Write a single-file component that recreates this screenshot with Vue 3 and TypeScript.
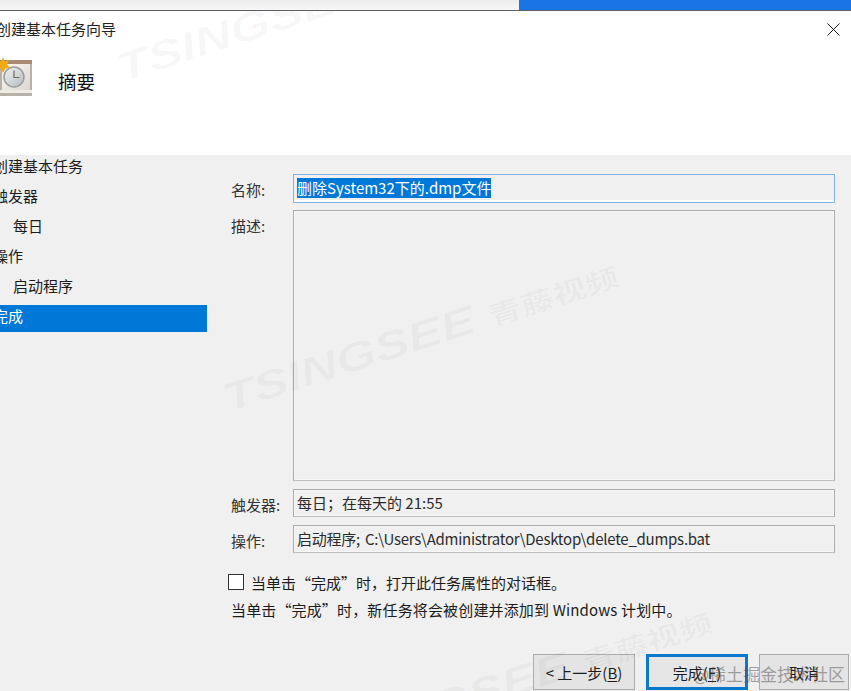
<script setup lang="ts">
const steps = [
  { label: '创建基本任务', sub: false, active: false },
  { label: '触发器', sub: false, active: false },
  { label: '每日', sub: true, active: false },
  { label: '操作', sub: false, active: false },
  { label: '启动程序', sub: true, active: false },
  { label: '完成', sub: false, active: true },
]
</script>

<template>
  <div class="page">
    <div class="topbar">
      <div class="topbar-left"></div>
      <div class="topbar-right"></div>
    </div>

    <div class="content">
      <header class="head">
        <div class="title-row">
          <span class="title">创建基本任务向导</span>
          <svg class="close" width="13" height="13" viewBox="0 0 13 13">
            <path d="M.5.5l12 12M12.5.5l-12 12" stroke="#111" stroke-width="1" fill="none" />
          </svg>
        </div>
        <div class="step-row">
          <svg class="wizard-icon" width="33" height="40" viewBox="0 0 33 40">
            <defs>
              <linearGradient id="page" x1="0" y1="0" x2="1" y2="1">
                <stop offset="0" stop-color="#fbf9f5" />
                <stop offset="1" stop-color="#dcd7ce" />
              </linearGradient>
              <linearGradient id="dial" x1="0" y1="0" x2="1" y2="1">
                <stop offset="0" stop-color="#f4f4f4" />
                <stop offset="1" stop-color="#b4bac1" />
              </linearGradient>
            </defs>
            <rect x="0" y="3" width="32" height="36" fill="#b7b1a7" />
            <rect x="0" y="3" width="32" height="4" fill="#a98a74" />
            <rect x="2" y="7" width="28" height="26" fill="url(#page)" />
            <rect x="0" y="33" width="32" height="3" fill="#efece6" />
            <circle cx="14" cy="20" r="10" fill="url(#dial)" stroke="#9a9c9e" stroke-width="1.5" />
            <path d="M14 13.500V20.500h5.500" stroke="#6d6a62" stroke-width="1.200" fill="none" />
            <path
              d="M3 0l1.600 4.400L9 3 7 7.500l3 3.500-4.600.2L3 16 .6 11.200-4 11l3-3.500L-3 3l4.400 1.400z"
              fill="#f5a913"
            />
          </svg>
          <span class="step-name">摘要</span>
        </div>
      </header>

      <main class="body">
        <nav class="steps">
          <div
            v-for="s in steps"
            :key="s.label"
            class="step"
            :class="{ sub: s.sub, active: s.active }"
          >
            <span>{{ s.label }}</span>
          </div>
        </nav>

        <section class="form">
          <div class="fields">
            <label class="lbl">名称:</label>
            <div class="box name"><span class="selected">删除System32下的.dmp文件</span></div>
            <label class="lbl">描述:</label>
            <div class="box"></div>
            <label class="lbl low">触发器:</label>
            <div class="box">每日；在每天的 21:55</div>
            <label class="lbl low">操作:</label>
            <div class="box path">启动程序; C:\Users\Administrator\Desktop\delete_dumps.bat</div>
          </div>

          <div class="check-row">
            <span class="checkbox"></span>
            <span>当单击“完成”时，打开此任务属性的对话框。</span>
          </div>
          <p class="note">当单击“完成”时，新任务将会被创建并添加到 Windows 计划中。</p>

          <div class="buttons">
            <button class="btn">&lt; 上一步(<u>B</u>)</button>
            <button class="btn primary">完成(<u>F</u>)</button>
            <button class="btn cancel">取消</button>
          </div>
        </section>
      </main>

      <div class="marks" aria-hidden="true">
        <span class="mark m1">TSINGSEE</span>
        <span class="mark m2">TSINGSEE <small>青藤视频</small></span>
        <span class="mark m3">TSINGSEE <small>青藤视频</small></span>
      </div>
    </div>

    <span class="credit">@稀土掘金技术社区</span>
  </div>
</template>

<style scoped>
.page {
  position: relative;
  width: 851px;
  height: 691px;
  overflow: hidden;
  display: flex;
  flex-direction: column;
  background: #f0f0f0;
  color: #1c1c1c;
  font-family: "Noto Sans CJK SC", "Noto Sans", sans-serif;
  font-size: 15px;
}
.topbar {
  display: flex;
  height: 11px;
  flex: none;
  border-bottom: 1px solid #5c5f63;
  box-sizing: border-box;
}
.topbar-left {
  width: 519px;
  background: linear-gradient(#ececec, #f7f7f7);
}
.topbar-right {
  flex: 1;
  background: #1a74e6;
}
.content {
  position: relative;
  flex: 1;
  display: flex;
  flex-direction: column;
  overflow: hidden;
}
.head {
  height: 144px;
  flex: none;
  background: #fff;
}
.title-row {
  display: flex;
  align-items: center;
  justify-content: space-between;
  height: 36px;
  padding-right: 11px;
  margin-left: -4px;
}
.title {
  line-height: 36px;
  color: #222;
}
.close {
  margin-top: 1px;
}
.step-row {
  display: flex;
  align-items: center;
  margin-top: 10px;
}
.wizard-icon {
  flex: none;
}
.step-name {
  margin-left: 25px;
  margin-top: 8px;
  font-size: 18.5px;
  color: #111;
}
.body {
  flex: 1;
  display: flex;
  background: #f0f0f0;
}
.steps {
  flex: none;
  width: 214px;
  margin-left: -7px;
}
.step {
  height: 30px;
  line-height: 21px;
}
.step.sub {
  padding-left: 20px;
}
.step.active {
  height: 27px;
  background: #0078d7;
  color: #fff;
}
.form {
  flex: 1;
  padding: 19px 16px 0 24px;
  display: flex;
  flex-direction: column;
  min-width: 0;
}
.fields {
  display: grid;
  grid-template-columns: 38px 1fr;
  grid-template-rows: 28px 271px 28px 28px;
  column-gap: 24px;
  row-gap: 8px;
}
.lbl {
  font-size: 15px;
  line-height: 32px;
  white-space: nowrap;
  color: #333;
}
.lbl.low {
  line-height: 31px;
}
.box {
  border: 1px solid #ababab;
  border-bottom-color: #bdbdbd;
  background: #f0f0f0;
  box-shadow: inset 0 0 0 1px #f7f7f7;
  box-sizing: border-box;
  padding-left: 3px;
  line-height: 25px;
  white-space: nowrap;
  overflow: hidden;
  color: #2b2b2b;
}
.box.path {
  letter-spacing: -0.25px;
  word-spacing: 2px;
}
.box.name {
  margin-bottom: -1px;
  border-color: #7db1de;
  box-shadow: inset 0 -2px 0 #fff;
  padding-top: 3px;
  line-height: 20px;
}
.selected {
  display: inline-block;
  background: #0078d7;
  color: #fff;
  height: 20px;
}
.check-row {
  display: flex;
  align-items: center;
  gap: 7px;
  margin-top: 21px;
  margin-left: -3px;
  height: 16px;
}
.checkbox {
  width: 16px;
  height: 16px;
  box-sizing: border-box;
  border: 1px solid #333;
  background: #fff;
}
.note {
  margin: 12px 0 0;
  line-height: 16px;
  height: 16px;
  white-space: nowrap;
  letter-spacing: 0.15px;
}
.buttons {
  display: flex;
  justify-content: flex-end;
  gap: 11px;
  margin-top: 36px;
  margin-right: -14px;
}
.btn {
  width: 102px;
  height: 36px;
  padding: 0;
  box-sizing: border-box;
  border: 1px solid #adadad;
  background: #e4e4e4;
  font: inherit;
  color: #1c1c1c;
}
.btn u {
  text-underline-offset: 2px;
}
.btn.primary {
  border: 3px solid #0a78cc;
  background: #e6e6e6;
}
.btn.cancel {
  width: 90px;
}
.marks {
  position: absolute;
  inset: 0;
  pointer-events: none;
}
.mark {
  position: absolute;
  white-space: nowrap;
  font-family: "Liberation Sans", "Noto Sans CJK SC", sans-serif;
  font-weight: 700;
  font-style: italic;
  font-size: 40px;
  color: rgba(0, 0, 0, 0.03);
  transform: rotate(-18deg) scaleX(1.3);
  transform-origin: left center;
}
.mark small {
  font-size: 26px;
  font-style: normal;
}
.m1 {
  left: 118px;
  top: 36px;
}
.m2 {
  left: 224px;
  top: 366px;
}
.m3 {
  left: 318px;
  top: 712px;
}
.credit {
  position: absolute;
  right: 6px;
  bottom: 5px;
  font-size: 17px;
  line-height: 24px;
  color: rgba(80, 80, 80, 0.5);
}
</style>

<style>
html,
body {
  margin: 0;
  overflow: hidden;
}
</style>
